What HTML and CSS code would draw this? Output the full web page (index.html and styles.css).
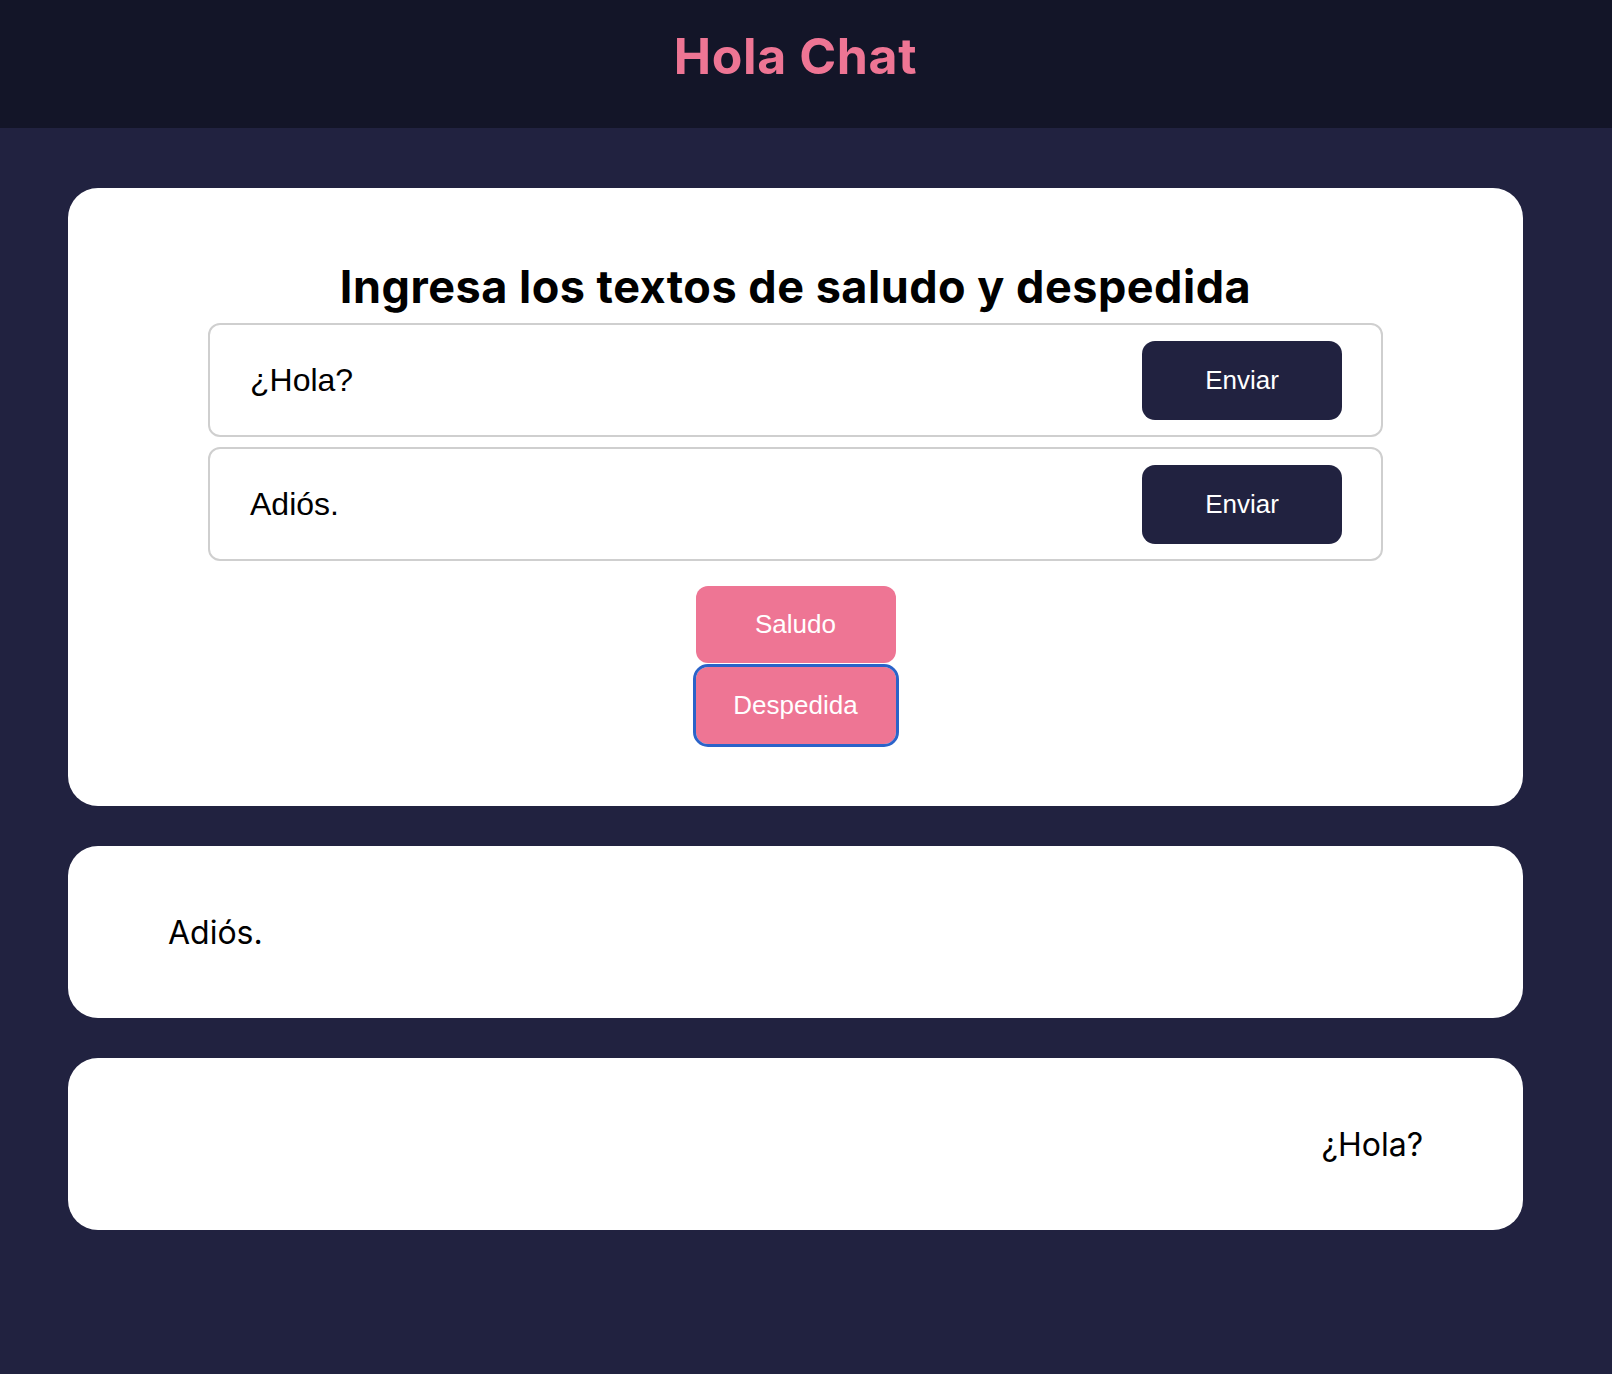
FILE: index.html
```html
<!DOCTYPE html>
<html lang="es">
<head>
<meta charset="utf-8">
<title>Hola Chat</title>
<link rel="stylesheet" href="styles.css">
</head>
<body>
<header class="topbar">
  <h1 class="brand">Hola Chat</h1>
</header>
<main class="page">
  <section class="card form-card">
    <h2 class="form-title">Ingresa los textos de saludo y despedida</h2>
    <div class="field-row">
      <span class="field-text">¿Hola?</span>
      <button class="send-btn" type="button">Enviar</button>
    </div>
    <div class="field-row">
      <span class="field-text">Adiós.</span>
      <button class="send-btn" type="button">Enviar</button>
    </div>
    <div class="actions">
      <button class="pink-btn" type="button">Saludo</button>
      <button class="pink-btn is-focused" type="button">Despedida</button>
    </div>
  </section>
  <section class="card message-card">
    <p class="message">Adiós.</p>
  </section>
  <section class="card message-card message-right">
    <p class="message">¿Hola?</p>
  </section>
</main>
</body>
</html>
```

FILE: styles.css
```css
* { box-sizing: border-box; }

html, body {
  margin: 0;
  padding: 0;
}

body {
  background: #212240;
  min-height: 1374px;
  font-family: Inter, "Noto Sans", sans-serif;
}

.topbar {
  height: 128px;
  background: #131528;
  display: flex;
  justify-content: center;
  padding: 29px 21px 0 0;
}

.brand {
  margin: 0;
  font-family: Inter, sans-serif;
  font-weight: 700;
  font-size: 50px;
  line-height: 54px;
  letter-spacing: 0.6px;
  color: #ee7594;
}

.page {
  display: flex;
  flex-direction: column;
  gap: 40px;
  padding: 60px 89px 60px 68px;
}

.card {
  background: #ffffff;
  border-radius: 30px;
}

.form-card {
  padding: 76px 140px 62px;
}

.form-title {
  margin: 0 0 14px;
  text-align: center;
  font-family: Inter, sans-serif;
  font-weight: 700;
  font-size: 45px;
  line-height: 45px;
  letter-spacing: 0.5px;
  color: #000;
}

.field-row {
  height: 114px;
  border: 2px solid #cfcfcf;
  border-radius: 12px;
  display: flex;
  align-items: center;
  justify-content: space-between;
  padding: 0 39px 0 40px;
}

.field-row + .field-row {
  margin-top: 10px;
}

.field-text {
  font-family: "Liberation Sans", Arial, sans-serif;
  font-size: 32px;
  color: #000;
}

.send-btn {
  width: 200px;
  height: 79px;
  border: none;
  border-radius: 13px;
  background: #212240;
  color: #fff;
  font-family: "Liberation Sans", Arial, sans-serif;
  font-size: 26px;
  cursor: pointer;
}

.actions {
  margin-top: 25px;
  display: flex;
  flex-direction: column;
  align-items: center;
  gap: 4px;
}

.pink-btn {
  width: 200px;
  height: 77px;
  border: none;
  border-radius: 12px;
  background: #ee7594;
  color: #fff;
  font-family: "Liberation Sans", Arial, sans-serif;
  font-size: 26px;
  cursor: pointer;
}

.pink-btn.is-focused {
  outline: 3px solid #2b63c9;
  outline-offset: 0;
}

.message-card {
  height: 172px;
  display: flex;
  align-items: center;
  padding: 0 100px;
}

.message-right {
  justify-content: flex-end;
}

.message {
  margin: 0;
  font-family: Inter, sans-serif;
  font-size: 32px;
  color: #000;
}
```
